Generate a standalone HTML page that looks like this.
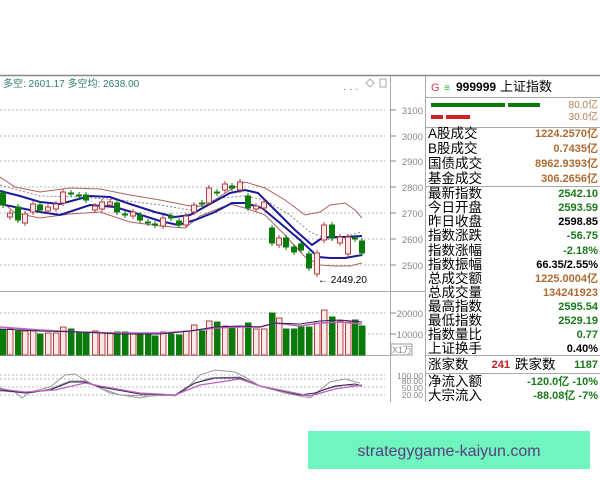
<!DOCTYPE html>
<html><head><meta charset="utf-8"><style>
html,body{margin:0;padding:0;background:#fff;width:600px;height:480px;overflow:hidden}
svg{display:block}
text{font-family:"Liberation Sans","Noto Sans CJK SC",sans-serif}
.l{font-size:13.5px;fill:#000}
.v{font-size:11px;font-weight:bold;text-anchor:end}
.ax{font-size:9.5px;fill:#888;text-anchor:end}
</style></head><body>
<svg width="600" height="480" viewBox="0 0 600 480">
<line x1="0" y1="75.5" x2="600" y2="75.5" stroke="#888" stroke-width="1.5"/>
<line x1="390.5" y1="76" x2="390.5" y2="402" stroke="#aaa"/>
<line x1="425.5" y1="76" x2="425.5" y2="402" stroke="#aaa"/>
<line x1="0" y1="291.5" x2="425" y2="291.5" stroke="#aaa"/>
<line x1="0" y1="355.5" x2="390" y2="355.5" stroke="#aaa"/>
<text x="3" y="87" style="font-size:10px;fill:#2e7d6e">多空: 2601.17 多空均: 2638.00</text>
<text x="343" y="92" style="font-size:10px;fill:#c040c0">· · ·</text>
<path d="M370 79 L374 83 L370 87 L366 83Z" fill="none" stroke="#aaa"/>
<rect x="380" y="79" width="6" height="8" fill="none" stroke="#aaa"/>
<g stroke="#bbb" stroke-dasharray="2,2">
<line x1="0" y1="110" x2="385" y2="110"/><line x1="0" y1="136" x2="385" y2="136"/>
<line x1="0" y1="161" x2="385" y2="161"/><line x1="0" y1="187" x2="385" y2="187"/>
<line x1="0" y1="213" x2="385" y2="213"/><line x1="0" y1="239" x2="385" y2="239"/>
<line x1="0" y1="265" x2="385" y2="265"/>
<line x1="0" y1="313" x2="385" y2="313"/><line x1="0" y1="334" x2="385" y2="334"/>
<line x1="0" y1="375" x2="385" y2="375"/><line x1="0" y1="379" x2="385" y2="379"/>
<line x1="0" y1="387" x2="385" y2="387"/><line x1="0" y1="395" x2="385" y2="395"/>
</g>
<g stroke="#888"><line x1="390" y1="110" x2="396" y2="110"/><line x1="390" y1="136" x2="396" y2="136"/><line x1="390" y1="161" x2="396" y2="161"/><line x1="390" y1="187" x2="396" y2="187"/><line x1="390" y1="213" x2="396" y2="213"/><line x1="390" y1="239" x2="396" y2="239"/><line x1="390" y1="265" x2="396" y2="265"/><line x1="390" y1="313" x2="396" y2="313"/><line x1="390" y1="334" x2="396" y2="334"/></g>
<text class="ax" x="423" y="114">3100</text><text class="ax" x="423" y="140">3000</text>
<text class="ax" x="423" y="165">2900</text><text class="ax" x="423" y="191">2800</text>
<text class="ax" x="423" y="217">2700</text><text class="ax" x="423" y="243">2600</text>
<text class="ax" x="423" y="269">2500</text>
<text class="ax" x="423" y="317">20000</text><text class="ax" x="423" y="338">10000</text>
<rect x="391" y="344" width="21" height="11" fill="none" stroke="#999"/>
<text x="392" y="353" style="font-size:9px;fill:#888">X1万</text>
<text class="ax" x="423" y="379" style="font-size:8.5px">100.00</text>
<text class="ax" x="423" y="384" style="font-size:8.5px">80.00</text>
<text class="ax" x="423" y="391" style="font-size:8.5px">50.00</text>
<text class="ax" x="423" y="398" style="font-size:8.5px">20.00</text>
<g fill="none">
<polyline stroke="#b06060" points="0,177 15,187 40,192 70,188 100,189 130,195 160,200 190,206 205,206 230,190 245,182 265,188 285,200 305,215 320,212 330,205 345,203 355,210 362,218"/>
<polyline stroke="#b06060" points="0,200 15,213 40,218 70,214 100,212 130,222 160,226 185,228 200,216 230,204 245,208 265,215 285,235 305,257 320,265 335,266 350,266 362,263"/>
<polyline stroke="#888" stroke-dasharray="2,2" points="0,185 40,196 80,197 120,200 160,205 190,210 220,198 245,196 265,200 290,215 310,232 330,240 362,232"/>
<polyline stroke="#1a1a9a" stroke-width="2" points="0,191 20,196 40,202 60,204 90,196 110,197 130,204 155,212 175,217 190,215 210,204 230,193 245,190 258,193 275,210 295,230 312,245 322,238 330,237 345,237 362,236"/>
<polyline stroke="#1a1a9a" stroke-width="2" points="0,204 20,208 40,212 60,215 90,205 115,207 135,213 160,221 178,225 195,220 215,212 232,203 245,203 262,208 280,223 300,240 318,257 330,258 345,258 362,255"/>
</g>
<g id="c" stroke-width="1"></g>
<text x="318" y="283" style="font-size:10px;fill:#000">← 2449.20</text>
<g id="v"></g>
<polyline fill="none" stroke="#c060c0" stroke-width="1.5" points="0,327 40,330 80,332 120,333 160,333 190,331 215,328 240,327 260,327 275,323 300,326 320,323 340,322 362,324"/>
<polyline fill="none" stroke="#302050" stroke-width="1" points="0,329 40,331 80,332 120,334 160,334 190,331 215,327 240,326 260,327 275,323 300,324 320,321 340,320 362,322"/>
<polyline fill="none" stroke="#999" points="0,388 15,392 22,398 30,392 50,387 65,375 75,374 90,383 110,393 140,398 160,394 175,396 185,390 200,375 215,370 235,372 245,377 260,386 285,393 310,398 320,390 330,382 345,379 360,383"/>
<polyline fill="none" stroke="#999" points="0,391 30,393 50,389 70,381 85,381 100,388 120,395 150,396 175,395 190,385 210,378 240,377 260,386 290,394 310,396 325,389 345,385 360,386"/>
<polyline fill="none" stroke="#302050" points="0,390 25,393 50,390 70,382 85,382 100,387 140,394 175,395 195,383 215,378 240,378 260,386 300,395 315,393 335,386 355,384 362,386"/>
<polyline fill="none" stroke="#c060c0" stroke-width="1.3" points="0,389 25,392 55,390 85,383 100,386 140,393 175,395 200,385 240,379 260,386 310,396 335,389 362,385"/>
<g stroke="#aaa"><line x1="425" y1="97.5" x2="600" y2="97.5"/><line x1="425" y1="127.5" x2="600" y2="127.5"/><line x1="425" y1="186.5" x2="600" y2="186.5"/><line x1="425" y1="355.5" x2="600" y2="355.5"/><line x1="425" y1="373.5" x2="600" y2="373.5"/></g>
<text x="431" y="91" style="font-size:11px;fill:#d04040">G</text>
<text x="444" y="91" style="font-size:10px;fill:#3a3">≡</text>
<text x="456" y="91" style="font-size:12px;font-weight:bold;fill:#000">999999</text>
<text x="500" y="91" style="font-size:13px;fill:#000">上证指数</text>
<rect x="431" y="103" width="74" height="4" fill="#0a7a0a"/><rect x="508" y="103" width="32" height="4" fill="#0a7a0a"/>
<rect x="431" y="115" width="12" height="4" fill="#d02020"/><rect x="446" y="115" width="24" height="4" fill="#d02020"/>
<text class="v" x="598" y="108" style="font-weight:normal;fill:#b08050;font-size:10px">80.0亿</text>
<text class="v" x="598" y="120" style="font-weight:normal;fill:#b08050;font-size:10px">30.0亿</text>
<g>
<text class="l" x="428" y="138">A股成交</text><text class="l" x="428" y="153">B股成交</text>
<text class="l" x="428" y="168">国债成交</text><text class="l" x="428" y="183">基金成交</text>
<text class="l" x="428" y="198">最新指数</text><text class="l" x="428" y="212">今日开盘</text>
<text class="l" x="428" y="226">昨日收盘</text><text class="l" x="428" y="240">指数涨跌</text>
<text class="l" x="428" y="255">指数涨幅</text><text class="l" x="428" y="269">指数振幅</text>
<text class="l" x="428" y="283">总成交额</text><text class="l" x="428" y="297">总成交量</text>
<text class="l" x="428" y="311">最高指数</text><text class="l" x="428" y="325">最低指数</text>
<text class="l" x="428" y="339">指数量比</text><text class="l" x="428" y="353">上证换手</text>
<text class="l" x="428" y="369">涨家数</text><text class="l" x="515" y="369">跌家数</text>
<text class="l" x="428" y="386">净流入额</text><text class="l" x="428" y="400">大宗流入</text>
</g>
<g>
<text class="v" x="598" y="137" fill="#b06a30">1224.2570亿</text>
<text class="v" x="598" y="152" fill="#b06a30">0.7435亿</text>
<text class="v" x="598" y="167" fill="#b06a30">8962.9393亿</text>
<text class="v" x="598" y="182" fill="#b06a30">306.2656亿</text>
<text class="v" x="598" y="197" fill="#1a7a1a">2542.10</text>
<text class="v" x="598" y="211" fill="#1a7a1a">2593.59</text>
<text class="v" x="598" y="225" fill="#000">2598.85</text>
<text class="v" x="598" y="239" fill="#1a7a1a">-56.75</text>
<text class="v" x="598" y="254" fill="#1a7a1a">-2.18%</text>
<text class="v" x="598" y="268" fill="#000">66.35/2.55%</text>
<text class="v" x="598" y="282" fill="#b06a30">1225.0004亿</text>
<text class="v" x="598" y="296" fill="#b06a30">134241923</text>
<text class="v" x="598" y="310" fill="#1a7a1a">2595.54</text>
<text class="v" x="598" y="324" fill="#1a7a1a">2529.19</text>
<text class="v" x="598" y="338" fill="#1a7a1a">0.77</text>
<text class="v" x="598" y="352" fill="#000">0.40%</text>
<text class="v" x="510" y="368" fill="#c02020">241</text>
<text class="v" x="598" y="368" fill="#1a7a1a">1187</text>
<text class="v" x="598" y="385" fill="#1a7a1a">-120.0亿 -10%</text>
<text class="v" x="598" y="399" fill="#1a7a1a">-88.08亿 -7%</text>
</g>
<rect x="308" y="431" width="282" height="38" fill="#6ff5bd"/>
<text x="449" y="456" style="font-size:16px;fill:#5a3f80;text-anchor:middle">strategygame-kaiyun.com</text>
</svg>
<script>
var C=[[3,193,205,0],[10,213,217,1],[18,207,220,0],[25,214,223,1],[33,204,212,1],[40,205,210,0],[48,207,211,1],[56,204,209,1],[63,192,203,1],[71,193,194,0],[79,195,196,0],[86,195,200,0],[95,206,210,1],[102,202,209,1],[110,202,205,1],[117,203,212,0],[125,214,215,0],[133,212,216,1],[140,215,220,0],[148,222,223,0],[155,224,225,0],[163,218,226,1],[171,216,218,0],[179,221,225,0],[186,216,225,1],[194,205,212,1],[202,203,204,0],[209,188,203,1],[217,192,193,0],[225,184,190,1],[232,186,188,0],[240,182,190,1],[248,196,208,0],[256,206,209,1],[264,202,208,1],[272,228,243,0],[279,238,245,1],[286,238,247,0],[294,247,252,0],[301,244,250,0],[309,254,268,0],[317,253,274,1],[324,225,240,1],[332,225,238,0],[340,237,243,1],[348,237,254,1],[355,238,239,0],[362,241,253,0]];
var V=[330,329,331,331,331,334,333,333,327,329,333,332,331,333,333,332,332,333,333,334,336,332,334,335,331,325,331,321,322,326,327,327,323,329,329,313,318,329,329,327,327,323,310,317,321,322,320,326];
var s='',w='';
C.forEach(function(c,i){var x=c[0],g=!c[3];var col=g?'#0a7a0a':'#b04040';
s+='<line x1="'+x+'" y1="'+(c[1]-3)+'" x2="'+x+'" y2="'+(c[2]+3)+'" stroke="'+col+'"/>';
s+='<rect x="'+(x-2.5)+'" y="'+c[1]+'" width="5" height="'+Math.max(1,c[2]-c[1])+'" fill="'+(g?'#0a7a0a':'#fbe8e8')+'" stroke="'+col+'"/>';
var t=V[i];w+='<rect x="'+(x-2.5)+'" y="'+t+'" width="5.5" height="'+(355-t)+'" fill="'+(g?'#0a7a0a':'#fbe8e8')+'" stroke="'+col+'"/>';});
document.getElementById('c').innerHTML=s;document.getElementById('v').innerHTML=w;
</script>
</body></html>
